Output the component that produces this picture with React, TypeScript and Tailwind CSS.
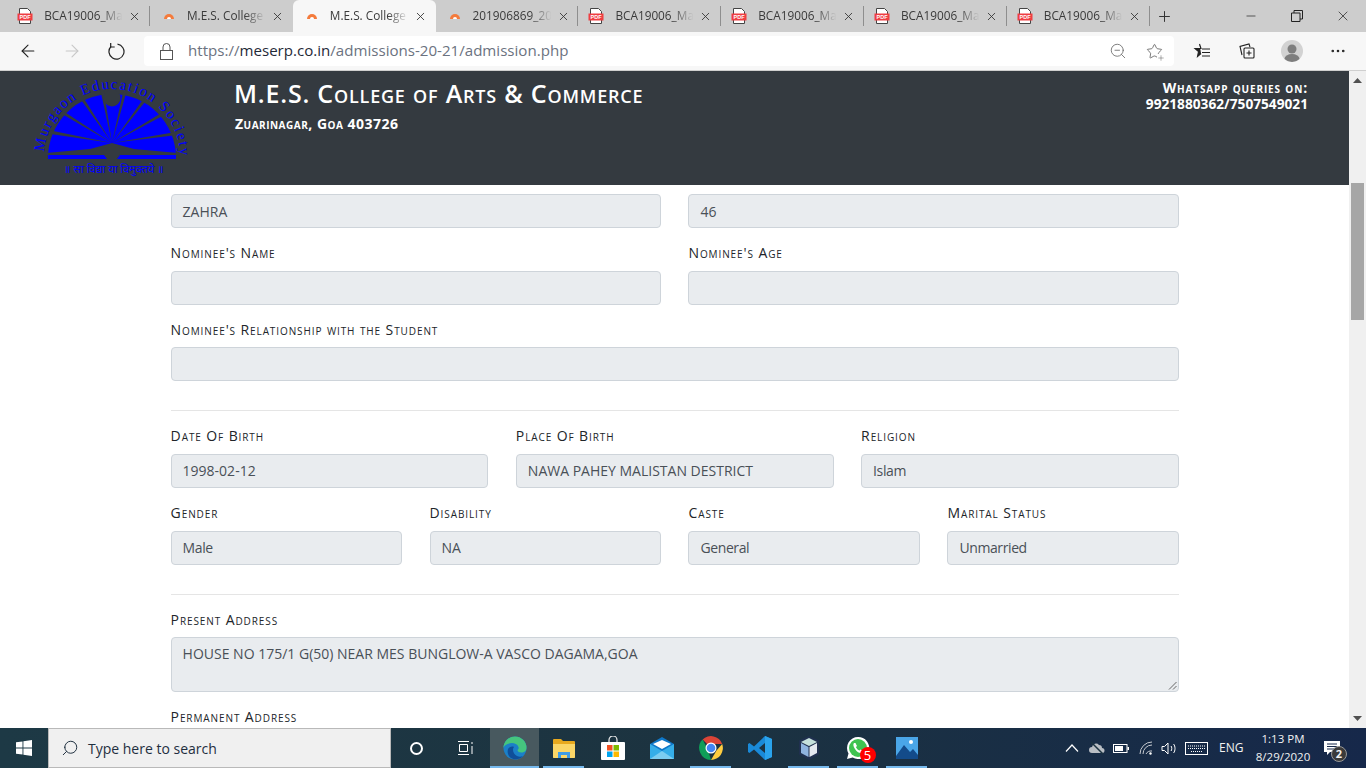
import { ArrowLeft, ArrowRight, Minus, MoreHorizontal, Plus, Search, Star, X, ZoomOut } from 'lucide-react'

const sans = 'font-["Open_Sans","Noto_Sans",sans-serif]'

const tabs = [
  { title: 'BCA19006_Ma', icon: 'pdf' },
  { title: 'M.E.S. College', icon: 'mes', noSep: true },
  { title: 'M.E.S. College', icon: 'mes', active: true },
  { title: '201906869_20', icon: 'mes' },
  { title: 'BCA19006_Ma', icon: 'pdf' },
  { title: 'BCA19006_Ma', icon: 'pdf' },
  { title: 'BCA19006_Ma', icon: 'pdf' },
  { title: 'BCA19006_Ma', icon: 'pdf' },
]

function PdfIcon() {
  return (
    <svg width="16" height="16" viewBox="0 0 16 16" className="shrink-0 -ml-[2px]">
      <path d="M2.5 .5h8l3 3v12h-11z" fill="#fff" stroke="#444" strokeWidth="1" />
      <rect x="0.5" y="5.500" width="15" height="7" fill="#ef3e42" />
      <text x="8" y="11" textAnchor="middle" fontSize="5.5" fontWeight="700" fill="#fff" fontFamily="Liberation Sans">PDF</text>
    </svg>
  )
}

function MesIcon() {
  return (
    <svg width="12" height="8" viewBox="0 0 12 8" className="shrink-0">
      <path d="M1 7a5 5 0 0 1 10 0z" fill="#f47b3c" />
      <path d="M4 7a2 2 0 0 1 4 0z" fill="#fff" />
    </svg>
  )
}

function Tab({ title, icon, active, noSep }: { title: string; icon: string; active?: boolean; noSep?: boolean }) {
  const edge = active
    ? 'bg-[#f7f7f7] rounded-t-[6px]'
    : noSep
      ? ''
      : 'border-r border-[#8e8e8e] [border-image:linear-gradient(to_bottom,transparent_20%,#8e8e8e_20%,#8e8e8e_80%,transparent_80%)_1]'
  return (
    <div className={`relative flex items-center h-8 w-[142.8px] shrink-0 ${edge}`}>
      <div className="w-[37px] flex justify-end shrink-0 pr-[1px]">
        <div className="w-[24px] flex justify-start">{icon === 'pdf' ? <PdfIcon /> : <span className="ml-[1px] flex"><MesIcon /></span>}</div>
      </div>
      <span className={`${sans} w-[80px] whitespace-nowrap text-[11.8px] text-[#3a3a3a] [mask-image:linear-gradient(to_right,black_72%,transparent_98%)]`}>{title}</span>
      <X size={13} strokeWidth={1.6} className="ml-[4px] text-[#333]" />
    </div>
  )
}

function Field({ label, value, tall, tight }: { label: string; value?: string; tall?: boolean; tight?: boolean }) {
  return (
    <div className="mb-[14px] min-w-0">
      <div className={`${sans} h-[21px] mb-[7.67px] text-[14px] leading-[21px] tracking-[0.9px] text-[#212529] [font-variant:small-caps] whitespace-nowrap`}>{label}</div>
      <Box value={value} tall={tall} tight={tight} />
    </div>
  )
}

function Box({ value, tall, tight }: { value?: string; tall?: boolean; tight?: boolean }) {
  return (
    <div className={`${sans} relative ${tall ? 'h-[55px] pt-[5px]' : 'h-[34px] flex items-center'} ${tight ? 'tracking-[-0.4px]' : ''} bg-[#e9ecef] border border-[#ced4da] rounded-[4px] px-[11px] text-[14px] text-[#495057] whitespace-nowrap`}>
      {value}
      {tall && (
        <svg width="9" height="9" viewBox="0 0 9 9" className="absolute right-[1px] bottom-[1px]">
          <path d="M8.5 1 1 8.5M8.5 5 5 8.5" stroke="#666" strokeWidth="1" />
        </svg>
      )}
    </div>
  )
}

function Logo() {
  const rays = [
    [35, 62], [45, 43], [63, 29], [83, 24], [104, 24], [123, 31], [141, 44], [153, 63],
  ]
  return (
    <svg width="180" height="112" viewBox="0 0 180 112" className="shrink-0">
      <path d="M28 87a64 64 0 0 1 128 0z" fill="#0000ff" />
      <rect x="28" y="83" width="128" height="5" fill="#0000ff" />
      {rays.map(([x, y]) => {
        // taper each ray from the hub out to the rim
        const dx = x - 92
        const dy = y - 72
        const len = Math.hypot(dx, dy)
        const nx = (-dy / len) * 1.7
        const ny = (dx / len) * 1.7
        const ex = x + (dx / len) * 6
        const ey = y + (dy / len) * 6
        return <polygon key={x} points={`92,72 ${ex + nx},${ey + ny} ${ex - nx},${ey - ny}`} fill="#343a40" />
      })}
      <path d="M26 82 70 78 92 72 114 78 158 82 158 84 100 84 97 88 87 88 84 84 26 84z" fill="#343a40" />
      <circle cx="92" cy="27" r="8.500" fill="#343a40" />
      <defs>
        <path id="logo-arc" d="M24 86a68 68 0 0 1 136 0" />
      </defs>
      <text fontFamily="Liberation Serif, serif" fontSize="15" fill="#0000ff" letterSpacing="1.6">
        <textPath href="#logo-arc" startOffset="5">Murgaon Education Society</textPath>
      </text>
      <text x="94" y="102" textAnchor="middle" fontSize="11" fill="#0000ff" fontFamily="Noto Sans, serif">॥ सा विद्या या विमुक्तये ॥</text>
    </svg>
  )
}

function Browser() {
  return (
    <div className="shrink-0">
      <div className="flex items-center h-8 bg-[#cdcdcd] pl-[7.2px]">
        {tabs.map((t, i) => (
          <Tab key={i} title={t.title} icon={t.icon} active={t.active} noSep={t.noSep} />
        ))}
        <Plus size={17} strokeWidth={1.4} className="ml-[6px] text-[#333]" />
        <div className="ml-auto flex items-center h-full">
          <div className="w-[46px] flex justify-center"><Minus size={14} strokeWidth={1.2} className="text-[#222]" /></div>
          <div className="w-[46px] flex justify-center">
            <svg width="12" height="12" viewBox="0 0 12 12" fill="none" stroke="#222"><path d="M.5 3h8.500v8.500H.5zM3 3V.5h8.500V9H9" /></svg>
          </div>
          <div className="w-[46px] flex justify-center"><X size={16} strokeWidth={1.1} className="text-[#222]" /></div>
        </div>
      </div>
      <div className="flex items-center h-[38px] bg-[#f7f7f7] border-b border-[#cfcfcf] box-content">
        <div className="w-[56px] flex justify-center"><ArrowLeft size={20} strokeWidth={1.3} className="text-[#222]" /></div>
        <div className="w-[32px] flex justify-center"><ArrowRight size={20} strokeWidth={1.3} className="text-[#c8c8c8]" /></div>
        <div className="w-[56px] flex justify-center">
          <svg width="18" height="18" viewBox="0 0 18 18" fill="none" stroke="#222" strokeWidth="1.200"><path d="M10.500 2.200A7.500 7.500 0 1 1 4 4.500" /><path d="M3.700 1v4h4" /></svg>
        </div>
        <div className="flex items-center w-[1030px] h-[30px] bg-white rounded-[4px]">
          <svg width="13" height="17" viewBox="0 0 13 17" fill="none" stroke="#555" className="ml-[16px]"><rect x=".5" y="7.500" width="12" height="9" /><path d="M3 7.500V4a3.500 3.500 0 0 1 7 0v3.500" /></svg>
          <span className={`${sans} ml-[15px] -mt-[1px] text-[15.1px] text-[#6b7280]`}>https://<span className="text-[#1f2937]">meserp.co.in</span>/admissions-20-21/admission.php</span>
          <ZoomOut size={18} strokeWidth={1.1} className="ml-auto text-[#666] -translate-x-[1px]" />
          <div className="relative ml-[18px] mr-[11px]">
            <Star size={17} strokeWidth={1.1} className="text-[#555]" />
            <Plus size={8} strokeWidth={1.4} className="absolute -right-[2px] -bottom-[2px] text-[#555] bg-white" />
          </div>
        </div>
        <div className="w-[56px] flex justify-center">
          <svg width="18" height="16" viewBox="0 0 18 16" fill="none" stroke="#222" strokeWidth="1.1"><path d="M6.500 1 8 5.500h-6l3.500 3-1 5 3.500-3" fill="#222" /><path d="M9 6h8M9 9.500h8M9 13h8" /></svg>
        </div>
        <div className="w-[34px] flex justify-center">
          <svg width="16" height="16" viewBox="0 0 16 16" fill="none" stroke="#222" strokeWidth="1.1"><path d="M3 12 1 3.500 10 1l1 3" /><rect x="5" y="5" width="10" height="10" rx="1" /><path d="M10 7.500v5M7.500 10h5" /></svg>
        </div>
        <div className="w-[56px] flex justify-center">
          <svg width="22" height="22" viewBox="0 0 22 22">
            <circle cx="11" cy="11" r="11" fill="#d2d2d2" />
            <circle cx="11" cy="9" r="4.500" fill="#7e7e7e" />
            <path d="M3.500 19a7.500 5 0 0 1 15 0 11 11 0 0 1-15 0z" fill="#7e7e7e" />
          </svg>
        </div>
        <div className="w-[36px] flex justify-center"><MoreHorizontal size={18} strokeWidth={1.5} className="text-[#222]" /></div>
      </div>
    </div>
  )
}

function Page() {
  return (
    <div className="flex-1 min-h-0 flex">
      <div className="flex-1 min-w-0 flex flex-col overflow-hidden bg-white">
        <header className="shrink-0 h-[114px] bg-[#343a40] flex text-white">
          <div className="ml-[20px]"><Logo /></div>
          <div className={`${sans} ml-[35px] pt-[5px] [font-variant:small-caps] font-semibold`}>
            <div className="-ml-[1px] text-[25px] leading-[34px] tracking-[0.8px] whitespace-nowrap">M.E.S. College of Arts &amp; Commerce</div>
            <div className="mt-[3px] text-[14px] leading-[21px] tracking-[0.5px] font-bold whitespace-nowrap">Zuarinagar, Goa 403726</div>
          </div>
          <div className={`${sans} ml-auto mr-[41px] pt-[9px] text-right font-bold text-[14px] leading-[16px]`}>
            <div className="[font-variant:small-caps] tracking-[0.85px]">Whatsapp queries on:</div>
            <div className="text-[13.7px]">9921880362/7507549021</div>
          </div>
        </header>
        <main className="ml-[170.6px] w-[1008.4px] pt-[9px]">
          <div className="grid grid-cols-2 gap-x-[27.4px] mb-[14px]">
            <Box value="ZAHRA" />
            <Box value="46" />
          </div>
          <div className="grid grid-cols-2 gap-x-[27.4px]">
            <Field label="Nominee's Name" />
            <Field label="Nominee's Age" />
          </div>
          <Field label="Nominee's Relationship with the Student" />
          <hr className="mt-[29px] mb-[14px] border-[#e5e5e5]" />
          <div className="grid grid-cols-3 gap-x-[27.4px]">
            <Field label="Date Of Birth" value="1998-02-12" />
            <Field label="Place Of Birth" value="NAWA PAHEY MALISTAN DESTRICT" />
            <Field label="Religion" value="Islam" tight />
          </div>
          <div className="grid grid-cols-4 gap-x-[27.4px]">
            <Field label="Gender" value="Male" tight />
            <Field label="Disability" value="NA" />
            <Field label="Caste" value="General" tight />
            <Field label="Marital Status" value="Unmarried" tight />
          </div>
          <hr className="mt-[15px] mb-[14px] border-[#e5e5e5]" />
          <Field label="Present Address" value="HOUSE NO 175/1 G(50) NEAR MES BUNGLOW-A VASCO DAGAMA,GOA" tall />
          <Field label="Permanent Address" />
        </main>
      </div>
      <div className="w-[17px] shrink-0 bg-[#f0f0f0] flex flex-col items-center">
        <svg width="9" height="5" viewBox="0 0 9 5" className="mt-[7px]"><path d="M0 5h9L4.500 0z" fill="#505050" /></svg>
        <div className="mt-[100px] w-[13px] h-[137px] bg-[#a6a6a6]" />
        <svg width="9" height="5" viewBox="0 0 9 5" className="mt-auto mb-[7px]"><path d="M0 0h9L4.500 5z" fill="#505050" /></svg>
      </div>
    </div>
  )
}

function TaskIcon({ active, bar, children }: { active?: boolean; bar?: boolean; children: React.ReactNode }) {
  return (
    <div className={`relative w-[49px] h-full flex items-center justify-center ${active ? 'bg-[#48595f]' : ''}`}>
      {children}
      {bar && <div className={`absolute bottom-0 h-[2px] bg-[#76b9ed] ${active ? 'inset-x-0' : 'inset-x-[4px]'}`} />}
    </div>
  )
}

function Taskbar() {
  return (
    <div className={`${sans} shrink-0 h-[40px] flex items-center bg-linear-to-r from-[#1d3945] via-[#1c3340] to-[#16284a] text-white`}>
      <div className="w-[48px] flex justify-center">
        <svg width="16" height="16" viewBox="0 0 16 16" fill="#fff"><path d="M0 2.300 6.500 1.400v6.100H0zM7.400 1.300 16 0v7.500H7.400zM0 8.500h6.500v6.100L0 13.700zM7.400 8.500H16V16l-8.600-1.300z" /></svg>
      </div>
      <div className="w-[343px] h-full flex items-center bg-[#f0f0f0] border border-[#b9b9b9] text-[#1f2f3f]">
        <Search size={18} strokeWidth={1.3} className="ml-[12px] -scale-x-100" />
        <span className="ml-[9px] text-[14px]">Type here to search</span>
      </div>
      <div className="w-[50px] flex justify-center"><div className="w-[13px] h-[13px] rounded-full border-2 border-white" /></div>
      <div className="w-[49px] flex justify-center">
        <svg width="16" height="14" viewBox="0 0 16 14" fill="none" stroke="#fff"><path d="M0 .5h11M0 13.500h11M1.500 3.500h8v7h-8zM14 1v2M14 5v8" /></svg>
      </div>
      <div className="flex h-full">
        <TaskIcon active bar>
          <svg width="24" height="24" viewBox="0 0 24 24">
            <circle cx="12" cy="12" r="11.500" fill="#1b80c8" />
            <path d="M.5 12a11.500 11.500 0 0 1 23 0c0 3-2.500 4.500-5 4.500-3 0-4-1.500-4-2.500 1-1 1.500-1.500 1-3-1-3-4-4-6.500-4C5 7 1 9 .5 12z" fill="#45c57e" />
            <path d="M5 13c1-2 4-3 6-2-2 2-1 7 3 9 2 1 4 1 6 0-3 4-9 4-12 2-3-2-4-6-3-9z" fill="#0f4f9a" />
          </svg>
        </TaskIcon>
        <TaskIcon bar>
          <svg width="22" height="20" viewBox="0 0 22 20">
            <path d="M0 2a1 1 0 0 1 1-1h7l2 2h11a1 1 0 0 1 1 1v15a1 1 0 0 1-1 1H1a1 1 0 0 1-1-1z" fill="#e8a91e" />
            <path d="M0 6h22v13a1 1 0 0 1-1 1H1a1 1 0 0 1-1-1z" fill="#fbd667" />
            <path d="M5 14h12v6h-3v-3H8v3H5z" fill="#3f9ce6" />
          </svg>
        </TaskIcon>
        <TaskIcon>
          <svg width="24" height="24" viewBox="0 0 24 24">
            <path d="M8 7V4a4 4 0 0 1 8 0v3" fill="none" stroke="#eee" strokeWidth="1.200" />
            <rect y="6" width="24" height="18" rx="1" fill="#fff" />
            <rect x="6" y="9" width="5.500" height="5.500" fill="#f25022" /><rect x="12.500" y="9" width="5.500" height="5.500" fill="#7fba00" />
            <rect x="6" y="15.500" width="5.500" height="5.500" fill="#00a4ef" /><rect x="12.500" y="15.500" width="5.500" height="5.500" fill="#ffb900" />
          </svg>
        </TaskIcon>
        <TaskIcon>
          <svg width="24" height="22" viewBox="0 0 24 22">
            <path d="M0 7 12 0l12 7v15H0z" fill="#0f78c9" />
            <path d="M0 7l12 7 12-7v15H0z" fill="#35aee8" />
            <path d="M3 7l9-4 9 4-9 5z" fill="#fff" />
            <path d="M0 22l12-8 12 8z" fill="#7ccdf0" />
          </svg>
        </TaskIcon>
        <TaskIcon bar>
          <svg width="24" height="24" viewBox="0 0 24 24">
            <path d="M12 12 3.600 3.600A11.900 11.900 0 0 1 23.200 8H12z" fill="#db4437" />
            <path d="M12 24A12 12 0 0 1 3.600 3.600L9 14z" fill="#0f9d58" />
            <path d="M23.200 8A12 12 0 0 1 12 24l5.500-9.500z" fill="#ffcd40" />
            <circle cx="12" cy="12" r="5.500" fill="#fff" /><circle cx="12" cy="12" r="4.300" fill="#4285f4" />
          </svg>
        </TaskIcon>
        <TaskIcon>
          <svg width="24" height="24" viewBox="0 0 24 24">
            <path d="M17 0 24 3v18l-7 3L6 13.500 1.500 17 0 16v-8l1.500-1L6 10.500zM17 7l-6 5 6 5z" fill="#1a8ad8" />
            <path d="M17 0 24 3v18l-7 3z" fill="#2aa3ec" />
          </svg>
        </TaskIcon>
        <TaskIcon bar>
          <svg width="22" height="24" viewBox="0 0 22 24">
            <path d="M11 0 21 4.500v14L11 24 1 18.500v-14z" fill="#20304f" />
            <path d="M11 2 19 6l-8 4-8-4z" fill="#c5e0dc" />
            <path d="M3 7l7.500 4v10L3 17z" fill="#8fb4e0" /><path d="M19 7l-7.500 4v10l7.500-4z" fill="#e4e8f0" />
          </svg>
        </TaskIcon>
        <TaskIcon bar>
          <div className="relative">
            <svg width="24" height="24" viewBox="0 0 24 24">
              <path d="M12 1a11 11 0 0 0-9.500 16.500L1 23l5.700-1.500A11 11 0 1 0 12 1z" fill="#fff" />
              <circle cx="12" cy="12" r="9" fill="#3fc351" />
              <path d="M8 7c-1 1-1 3 1 6s4 4 6 4c1 0 2-1 2-2l-2.500-1.500-1 1c-1 0-3.500-2.500-3.500-3.500l1-1L9.500 7z" fill="#fff" />
            </svg>
            <div className="absolute -right-[6px] -bottom-[3px] w-[16px] h-[16px] rounded-full bg-[#f00] text-white text-[13px] leading-[16px] text-center">5</div>
          </div>
        </TaskIcon>
        <TaskIcon bar>
          <svg width="22" height="22" viewBox="0 0 22 22">
            <rect width="22" height="22" fill="#4aa6e8" />
            <circle cx="15" cy="5" r="2" fill="#fff" />
            <path d="M0 19 8 8l6 7 3-3 5 6v4H0z" fill="#134b8a" />
          </svg>
        </TaskIcon>
      </div>
      <div className="ml-auto flex items-center h-full text-[12px] text-[#f2f2f2]">
        <svg width="14" height="8" viewBox="0 0 14 8" fill="none" stroke="#fff" strokeWidth="1.200" className="mr-[10px]"><path d="M1 7.500 7 1l6 6.500" /></svg>
        <svg width="16" height="14" viewBox="0 0 16 14" className="mr-[8px]"><path d="M3 12a3 3 0 0 1 0-6 4 4 0 0 1 7-2 3 3 0 0 1 3 3 2.500 2.500 0 0 1 0 5z" fill="#b9bec4" /><path d="M2 1l12 12" stroke="#1c3340" strokeWidth="1.500" /></svg>
        <svg width="16" height="9" viewBox="0 0 16 9" className="mr-[10px]"><rect x=".5" y=".5" width="13.500" height="8" fill="none" stroke="#fff" /><rect x="2" y="2" width="8" height="5" fill="#fff" /><rect x="14.500" y="3" width="1.500" height="3" fill="#fff" /></svg>
        <svg width="14" height="14" viewBox="0 0 14 14" fill="none" stroke="#c7cbd1" className="mr-[8px]"><path d="M1 13A12 12 0 0 1 13 1M4 13a9 9 0 0 1 9-9M7 13a6 6 0 0 1 6-3" /><circle cx="11.500" cy="12.500" r="1.200" fill="#fff" stroke="none" /></svg>
        <svg width="16" height="13" viewBox="0 0 16 13" fill="none" stroke="#fff" className="mr-[8px]"><path d="M1 4.500h2.500L7 1v11L3.500 8.500H1zM10 4c1 1 1 4 0 5M12.500 2c2 2 2 7 0 9" /></svg>
        <svg width="23" height="13" viewBox="0 0 23 13" fill="none" stroke="#fff" className="mr-[11px]"><rect x=".5" y=".5" width="22" height="12" /><path d="M3 4h17M3 6.500h17M6 9.500h11" strokeDasharray="1 1" /></svg>
        <span className="w-[24px]">ENG</span>
        <div className="ml-[2px] w-[76px] text-center leading-[18px] text-[11.5px]">
          <div>1:13 PM</div>
          <div>8/29/2020</div>
        </div>
        <div className="relative ml-[3px] mr-[26px] w-[16px]">
          <svg width="16" height="14" viewBox="0 0 16 14" className="block"><path d="M0 0h16v11H6l-3 3v-3H0z" fill="#fff" /><path d="M3 3h10M3 5.500h10M3 8h7" stroke="#16284a" /></svg>
          <div className="absolute -right-[7px] -bottom-[7px] w-[16px] h-[16px] rounded-full bg-[#3a3a3a] border border-[#999] text-[11px] leading-[14px] text-center font-bold">2</div>
        </div>
      </div>
    </div>
  )
}

export default function App() {
  return (
    <div className="w-[1366px] h-[768px] flex flex-col overflow-hidden">
      <Browser />
      <Page />
      <Taskbar />
    </div>
  )
}
